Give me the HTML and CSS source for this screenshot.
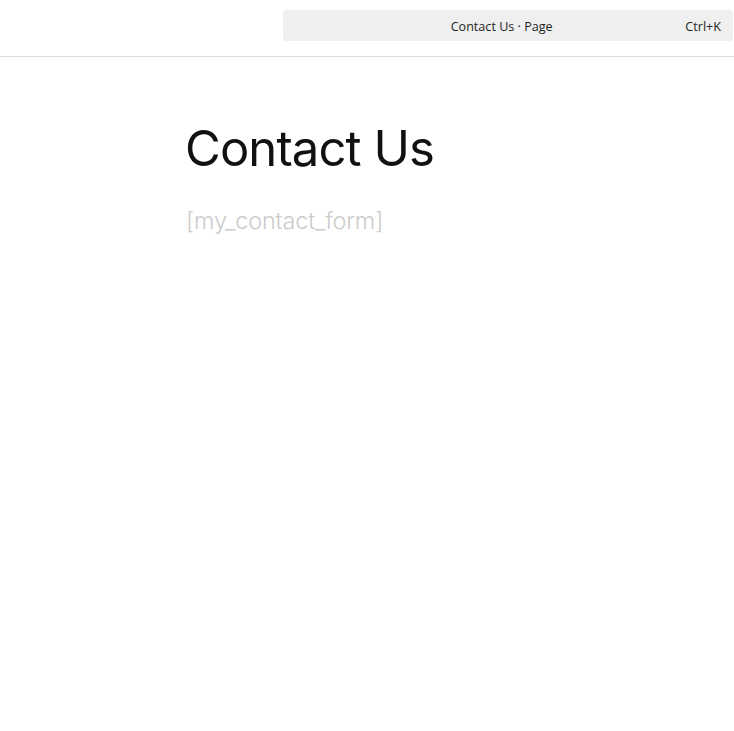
FILE: index.html
```html
<!DOCTYPE html>
<html>
<head>
<meta charset="utf-8">
<link rel="stylesheet" href="styles.css">
</head>
<body>
<header class="topbar">
  <div class="command">
    <span class="command-title">Contact Us · Page</span>
    <span class="command-key">Ctrl+K</span>
  </div>
</header>
<main class="content">
  <h1 class="page-title">Contact Us</h1>
  <p class="shortcode">[my_contact_form]</p>
</main>
</body>
</html>
```
FILE: styles.css
```css
html, body {
  margin: 0;
  padding: 0;
  background: #fff;
}
.topbar {
  height: 57px;
  box-sizing: border-box;
  border-bottom: 1px solid #dedede;
  display: flex;
  justify-content: flex-end;
  padding: 10px 1px 0 0;
}
.command {
  width: 450px;
  height: 31px;
  box-sizing: border-box;
  padding: 2px 12px 0 35px;
  background: #efefef;
  border-radius: 4px;
  display: flex;
  align-items: center;
  font-family: "Open Sans", "Noto Sans", sans-serif;
  font-size: 12.6px;
  color: #1e1e1e;
}
.command-title {
  flex: 1;
  text-align: center;
}
.content {
  padding: 0 0 0 185px;
}
.page-title {
  font-family: Inter, sans-serif;
  font-weight: 400;
  font-size: 49px;
  letter-spacing: -0.9px;
  color: #111;
  margin: 62px 0 0 0;
  line-height: 60px;
}
.shortcode {
  font-family: Inter, sans-serif;
  font-weight: 300;
  font-size: 23.5px;
  letter-spacing: -0.2px;
  color: #cccccc;
  margin: 27px 0 0 1px;
  line-height: 30px;
}
```
